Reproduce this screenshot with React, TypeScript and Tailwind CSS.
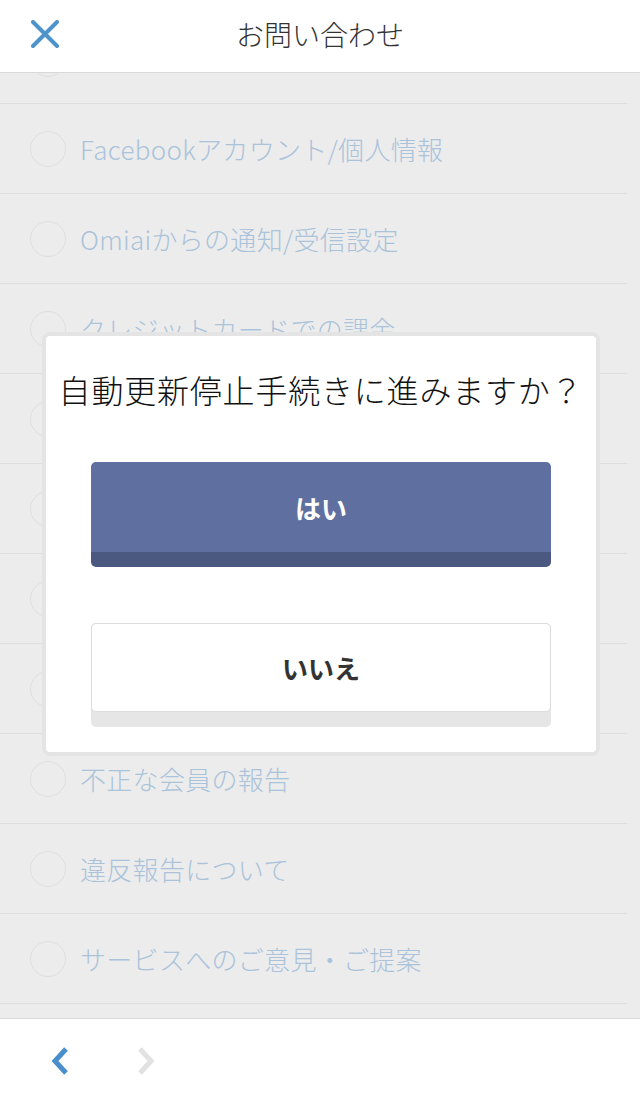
import React from "react";

const jp = { fontFamily: '"Noto Sans CJK JP", "Noto Sans", sans-serif' };

const topics = [
  "ログイン・登録について",
  "Facebookアカウント/個人情報",
  "Omiaiからの通知/受信設定",
  "クレジットカードでの課金",
  "自動更新の停止",
  "プロフィールについて",
  "メッセージについて",
  "退会について",
  "不正な会員の報告",
  "違反報告について",
  "サービスへのご意見・ご提案",
  "その他",
];

function TopicRow({ label }: { label: string }) {
  return (
    <div className="flex h-[90px] shrink-0 items-center gap-[14px] border-b border-[#dedede] pl-[30px]">
      <span className="h-[36px] w-[36px] shrink-0 rounded-full border-[1.5px] border-[#dfdfdf]" />
      <span className="text-[26px] font-light leading-none tracking-[0.3px] text-[#aac3da]">{label}</span>
    </div>
  );
}

function ConfirmDialog() {
  return (
    <div className="absolute left-[42px] top-[332px] w-[558px] rounded-[8px] border-4 border-[#e4e4e4] bg-white">
      <div className="flex flex-col items-center px-[44px] pb-[25px] pt-[33px]">
        <p className="text-[32px] font-light leading-[40px] tracking-[0.8px] text-[#111] whitespace-nowrap">
          自動更新停止手続きに進みますか？
        </p>
        <button className="mt-[53px] flex h-[105px] w-[460px] items-start justify-center rounded-[5px] border-b-[15px] border-[#4b5980] bg-[#5f70a0]">
          <span className="flex h-[90px] items-center text-[26px] font-bold text-white">はい</span>
        </button>
        <button className="mt-[56px] flex h-[104px] w-[460px] flex-col rounded-[5px] bg-[#e6e6e6]">
          <span className="flex h-[89px] w-full items-center justify-center rounded-[5px] border border-[#dcdcdc] bg-white text-[26px] font-bold text-[#333]">
            いいえ
          </span>
        </button>
      </div>
    </div>
  );
}

export default function App() {
  return (
    <div className="relative flex h-[1103px] w-[640px] flex-col overflow-hidden bg-[#ececec]" style={jp}>
      <header className="relative flex h-[73px] shrink-0 items-center justify-center border-b border-[#dadada] bg-white">
        <svg className="absolute left-[31px] top-[20px]" width="28" height="28" viewBox="0 0 28 28">
          <path d="M2 2 L26 26 M26 2 L2 26" stroke="#4d93cc" strokeWidth="4" strokeLinecap="round" />
        </svg>
        <h1 className="-mt-[4px] text-[28px] font-light leading-none text-[#333]">お問い合わせ</h1>
      </header>

      <div className="flex-1 overflow-hidden pr-[13px]">
        <div className="-mt-[59px] flex flex-col">
          {topics.map((t) => (
            <TopicRow key={t} label={t} />
          ))}
        </div>
      </div>

      <footer className="flex h-[85px] shrink-0 items-center gap-[68px] border-t border-[#dadada] bg-white pl-[51px]">
        <svg width="18" height="28" viewBox="0 0 18 28">
          <path d="M15 2 L4 14 L15 26" fill="none" stroke="#4a8fcb" strokeWidth="5" strokeLinejoin="miter" />
        </svg>
        <svg width="18" height="28" viewBox="0 0 18 28">
          <path d="M3 2 L14 14 L3 26" fill="none" stroke="#e2e2e2" strokeWidth="5" strokeLinejoin="miter" />
        </svg>
      </footer>

      <ConfirmDialog />
    </div>
  );
}
